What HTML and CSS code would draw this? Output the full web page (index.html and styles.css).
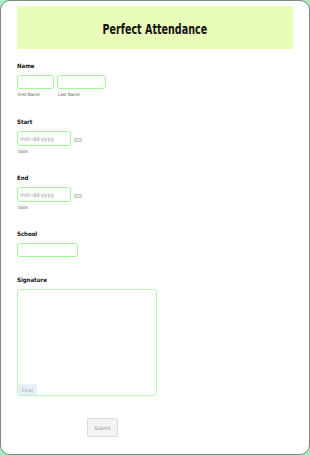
FILE: index.html
```html
<!DOCTYPE html>
<html lang="en">

<head>
    <meta charset="utf-8">
    <meta name="viewport" content="width=device-width, initial-scale=1.0">
    <title>Perfect Attendance</title>
    <link rel="stylesheet" href="styles.css">
</head>

<body>

    <div id="kort">
        <header>
            <h1>Perfect Attendance</h1>
        </header>

        <form>
            <div class="felt navn">
                <label>Name</label>
                <div class="raekke">
                    <div class="del">
                        <input type="text" class="fornavn">
                        <span class="under">First Name</span>
                    </div>
                    <div class="del">
                        <input type="text" class="efternavn">
                        <span class="under">Last Name</span>
                    </div>
                </div>
            </div>

            <div class="felt start">
                <label>Start</label>
                <div class="raekke dato">
                    <input type="text" class="datoinput" placeholder="mm-dd-yyyy">
                    <span class="kal"></span>
                </div>
                <span class="under">Date</span>
            </div>

            <div class="felt slut">
                <label>End</label>
                <div class="raekke dato">
                    <input type="text" class="datoinput" placeholder="mm-dd-yyyy">
                    <span class="kal"></span>
                </div>
                <span class="under">Date</span>
            </div>

            <div class="felt skole">
                <label>School</label>
                <input type="text" class="skoleinput">
            </div>

            <div class="felt underskrift">
                <label>Signature</label>
                <div class="pad">
                    <button type="button" class="ryd">Clear</button>
                </div>
            </div>

            <div class="knapper">
                <button type="button" class="send">Submit</button>
            </div>
        </form>
    </div>

</body>

</html>
```

FILE: styles.css
```css
body {
    margin: 0;
    padding: 0;
    background-color: #a9ecc0;
    font-family: "DejaVu Sans Condensed", "DejaVu Sans", sans-serif;
}

#kort {
    box-sizing: border-box;
    height: 455px;
    background-color: white;
    border: 1px solid #7b8a80;
    border-radius: 10px;
    padding: 5px 16px 0 16px;
}

header {
    height: 43px;
    background-color: #eafcb9;
    display: flex;
    align-items: center;
    justify-content: center;
}

h1 {
    margin: 0;
    margin-top: 2px;
    font-size: 14px;
    font-weight: bold;
    color: #111;
    transform: scaleX(0.76);
}

.felt label {
    display: block;
    height: 8px;
    line-height: 8px;
    font-size: 6px;
    font-weight: bold;
    color: #111;
    margin-bottom: 5px;
}

.navn { margin-top: 13px; }
.start { margin-top: 20px; }
.slut { margin-top: 19px; }
.skole { margin-top: 19px; }
.underskrift { margin-top: 19px; }

.raekke {
    display: flex;
    gap: 3px;
}

.dato {
    align-items: center;
}

.del {
    display: flex;
    flex-direction: column;
}

input {
    display: block;
    box-sizing: border-box;
    margin: 0;
    height: 14px;
    border: 1.5px solid #a2f59c;
    border-radius: 3px;
    padding: 0 2px;
    font-family: inherit;
    font-size: 6px;
    background: white;
    outline: none;
}

input::placeholder {
    color: #9a9a9a;
}

.fornavn { width: 37px; }
.efternavn { width: 49px; }
.datoinput { width: 54px; height: 15px; }
.skoleinput { width: 61px; }

.kal {
    display: block;
    width: 6px;
    height: 2px;
    background-color: #e4e4e4;
    border: 1px solid #c8c8c8;
    border-radius: 1px;
    margin-top: 2px;
}

.under {
    display: block;
    margin-top: 3px;
    padding-left: 1px;
    height: 6px;
    line-height: 6px;
    font-size: 4.5px;
    color: #555;
}

.pad {
    box-sizing: border-box;
    width: 140px;
    height: 107px;
    border: 1.5px solid #bdf5b8;
    border-radius: 3px;
    display: flex;
    align-items: flex-end;
}

.ryd {
    margin: 0;
    width: 19px;
    height: 11px;
    padding: 0;
    border: none;
    border-radius: 0 2px 0 2px;
    background-color: #e8f0fa;
    color: #9aa0a8;
    font-family: inherit;
    font-size: 5px;
}

.knapper {
    margin-top: 22px;
    padding-left: 70px;
}

.send {
    display: block;
    margin: 0;
    width: 31px;
    height: 19px;
    padding: 0;
    border: 1px solid #dcdcdc;
    border-radius: 2px;
    background-color: #f4f4f4;
    color: #8a8a8a;
    font-family: inherit;
    font-size: 5px;
}
```
